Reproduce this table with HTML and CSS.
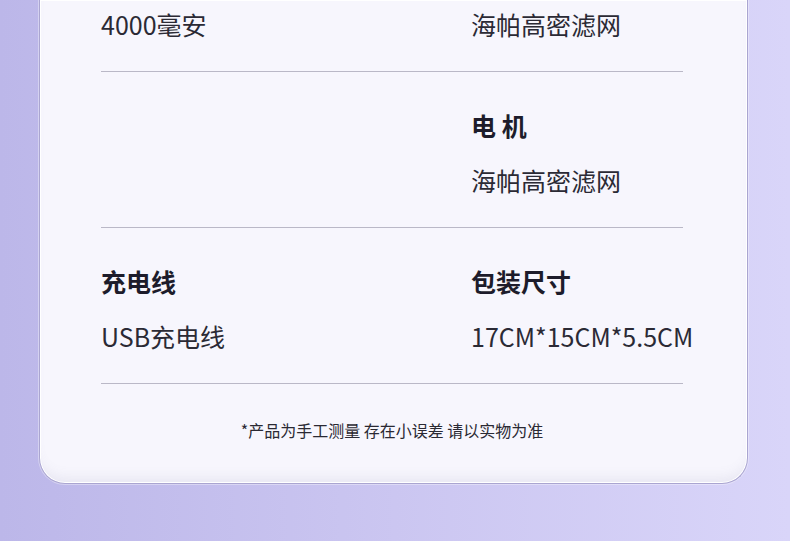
FILE: index.html
```
<!DOCTYPE html>
<html lang="zh-CN">

<head>
    <meta charset="UTF-8">
    <meta name="viewport" content="width=device-width, initial-scale=1.0">
    <title>产品参数</title>
    <link rel="stylesheet" href="styles.css">
</head>

<body>
    <section class="card">
        <div class="row row-first">
            <div class="cell">
                <p>4000毫安</p>
            </div>
            <div class="cell">
                <p>海帕高密滤网</p>
            </div>
        </div>
        <div class="row">
            <div class="cell"></div>
            <div class="cell">
                <h3>电 机</h3>
                <p>海帕高密滤网</p>
            </div>
        </div>
        <div class="row">
            <div class="cell">
                <h3>充电线</h3>
                <p>USB充电线</p>
            </div>
            <div class="cell">
                <h3>包装尺寸</h3>
                <p>17CM*15CM*5.5CM</p>
            </div>
        </div>
        <p class="note">*产品为手工测量 存在小误差 请以实物为准</p>
    </section>
</body>

</html>
```

FILE: styles.css
```
html,
body {
    width: 100%;
    height: 100%;
    margin: 0;
    padding: 0;
}

body {
    overflow: hidden;
    background: linear-gradient(90deg, #bcb7e9 0%, #cbc6f1 50%, #d9d5f9 100%);
    font-family: "Noto Sans CJK SC", "Noto Sans", sans-serif;
    color: #23222e;
}

.card {
    margin: 0 42px 0 39px;
    padding: 0 64px 42px 61px;
    background: #f7f6fd;
    border: 1px solid #aaa5d1;
    border-top: none;
    border-radius: 0 0 26px 26px;
    box-shadow:
        inset 0 0 0 1px #ffffff,
        inset 0 -12px 14px -8px rgba(110, 105, 150, 0.12),
        0 0 0 1px rgba(255, 255, 255, 0.35);
}

.row {
    display: grid;
    grid-template-columns: 370px 1fr;
    padding: 36px 0 30px;
    border-bottom: 1px solid #bab8c7;
}

.row-first {
    padding-top: 7px;
}

.cell h3,
.cell p {
    margin: 0;
    font-size: 25px;
    line-height: 34px;
}

.cell h3 {
    font-weight: bold;
    color: #1d1c2b;
    margin-bottom: 21px;
}

.cell p {
    font-weight: normal;
    color: #2b2a35;
}

.note {
    margin: 0;
    padding-top: 35px;
    text-align: center;
    font-size: 16px;
    line-height: 22px;
    color: #2a2933;
}
```
